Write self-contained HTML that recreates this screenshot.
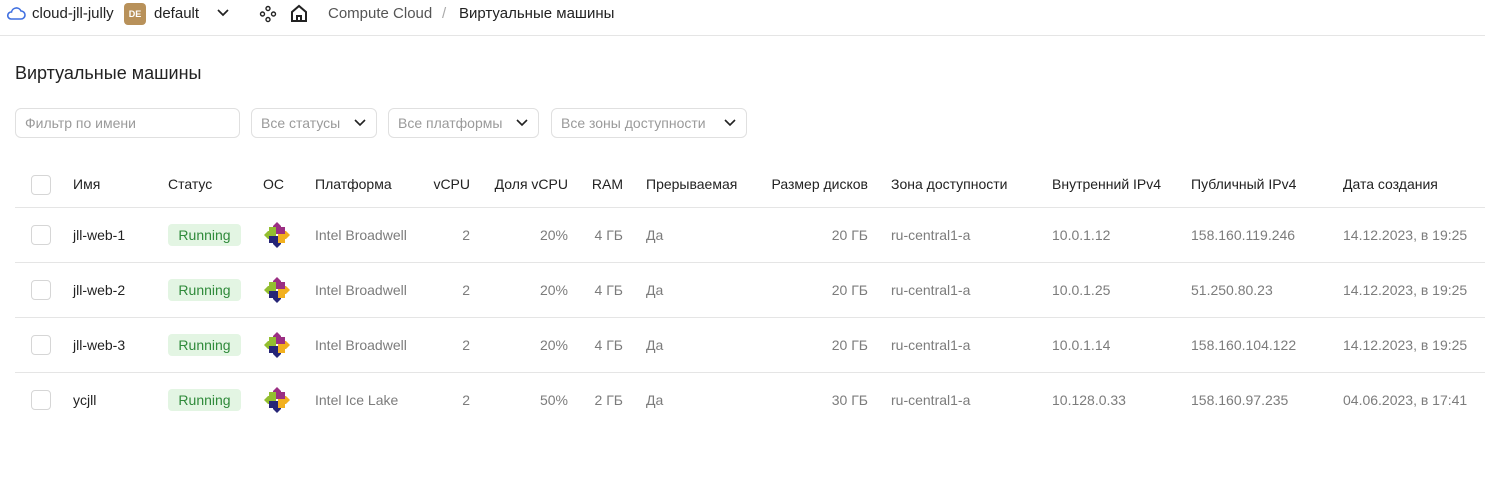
<!DOCTYPE html>
<html><head><meta charset="utf-8"><style>
body{margin:0;width:1485px;height:488px;background:#fff;font-family:"Liberation Sans",sans-serif;font-size:14px;color:#222;position:relative;overflow:hidden}
.a{position:absolute;white-space:nowrap}
.g{color:#7c7c7c}
.r{text-align:right}
.cb{position:absolute;left:31px;width:18px;height:18px;border:1px solid #d6d6d6;border-radius:4px;background:#fff}
.hl{position:absolute;left:15px;right:0;height:1px;background:#e5e5e5}
.run{position:absolute;left:168px;width:73px;height:22px;background:#e3f5e3;color:#2f8a3a;border-radius:4px;text-align:center;line-height:22px}
.sel{position:absolute;top:108px;height:30px;border:1px solid #e0e0e0;border-radius:6px;box-sizing:border-box;color:#9a9a9a;line-height:28px;padding-left:9px}
.sel svg{position:absolute;right:9px;top:9px}
</style></head><body>
<svg class="a" style="left:6px;top:5px" width="20" height="16" viewBox="0 0 20 16"><path d="M5 14h10a4 4 0 0 0 0-8 5 5 0 0 0-9.5 1A3.5 3.5 0 0 0 5 14z" fill="none" stroke="#3f6fe0" stroke-width="1.6"/></svg>
<div class="a" style="left:32px;top:5px;font-size:15px">cloud-jll-jully</div>
<div class="a" style="left:124px;top:3px;width:22px;height:22px;background:#b8915a;border-radius:4px;color:#fff;font-size:9px;font-weight:bold;line-height:22px;text-align:center">DE</div>
<div class="a" style="left:154px;top:5px;font-size:15px">default</div>
<svg class="a" style="left:216px;top:8px" width="14" height="10"><path d="M2 2l5 5 5-5" fill="none" stroke="#222" stroke-width="1.7"/></svg>
<svg class="a" style="left:259px;top:5px" width="18" height="18" viewBox="0 0 18 18" fill="none" stroke="#222" stroke-width="1.4"><circle cx="9" cy="3.5" r="2"/><circle cx="3.5" cy="9" r="2"/><circle cx="14.5" cy="9" r="2"/><circle cx="9" cy="14.5" r="2"/></svg>
<svg class="a" style="left:290px;top:4px" width="18" height="19" viewBox="0 0 18 19" fill="none" stroke="#222" stroke-width="2"><path d="M2 17V8l7-6 7 6v9zM7 17v-5h4v5"/></svg>
<div class="a" style="left:328px;top:5px;font-size:15px;color:#555">Compute Cloud</div>
<div class="a" style="left:442px;top:5px;font-size:15px;color:#aaa">/</div>
<div class="a" style="left:459px;top:5px;font-size:15px">Виртуальные машины</div>
<div class="a" style="left:0;right:0;top:35px;height:1px;background:#e5e5e5"></div>
<div class="a" style="left:15px;top:63px;font-size:18px;font-weight:500">Виртуальные машины</div>
<div class="sel" style="left:15px;width:225px">Фильтр по имени</div>
<div class="sel" style="left:251px;width:126px">Все статусы<svg width="14" height="10"><path d="M2 2l5 5 5-5" fill="none" stroke="#222" stroke-width="1.6"/></svg></div>
<div class="sel" style="left:388px;width:151px">Все платформы<svg width="14" height="10"><path d="M2 2l5 5 5-5" fill="none" stroke="#222" stroke-width="1.6"/></svg></div>
<div class="sel" style="left:551px;width:196px">Все зоны доступности<svg width="14" height="10"><path d="M2 2l5 5 5-5" fill="none" stroke="#222" stroke-width="1.6"/></svg></div>

<div class="cb" style="top:175px"></div>
<div class="a" style="top:176px;left:73px">Имя</div>
<div class="a" style="top:176px;left:168px">Статус</div>
<div class="a" style="top:176px;left:263px">ОС</div>
<div class="a" style="top:176px;left:315px">Платформа</div>
<div class="a r" style="top:176px;left:420px;width:50px">vCPU</div>
<div class="a r" style="top:176px;left:480px;width:88px">Доля vCPU</div>
<div class="a r" style="top:176px;left:573px;width:50px">RAM</div>
<div class="a" style="top:176px;left:646px">Прерываемая</div>
<div class="a r" style="top:176px;left:750px;width:118px">Размер дисков</div>
<div class="a" style="top:176px;left:891px">Зона доступности</div>
<div class="a" style="top:176px;left:1052px">Внутренний IPv4</div>
<div class="a" style="top:176px;left:1191px">Публичный IPv4</div>
<div class="a" style="top:176px;left:1343px">Дата создания</div>
<div class="hl" style="top:207px"></div>

<!-- rows -->
<div id="rows"></div>
<script></script>
<!-- row 1 -->
<div class="cb" style="top:225px"></div><div class="a" style="top:227px;left:73px">jll-web-1</div><div class="run" style="top:224px">Running</div>
<svg class="a" style="left:263px;top:221px" width="28" height="28" viewBox="0 0 28 28"><path d="M14 1l4 4v8h-8V5z" fill="#9b2f83"/><path d="M27 14l-4 4h-8v-8h8z" fill="#f2b01f"/><path d="M14 27l-4-4v-8h8v8z" fill="#262577"/><path d="M1 14l4-4h8v8H5z" fill="#93be30"/><rect x="6" y="6" width="7" height="7" fill="#93be30"/><rect x="15" y="6" width="7" height="7" fill="#9b2f83"/><rect x="6" y="15" width="7" height="7" fill="#262577"/><rect x="15" y="15" width="7" height="7" fill="#f2b01f"/></svg>
<div class="a g" style="top:227px;left:315px">Intel Broadwell</div><div class="a g r" style="top:227px;left:420px;width:50px">2</div><div class="a g r" style="top:227px;left:480px;width:88px">20%</div><div class="a g r" style="top:227px;left:573px;width:50px">4 ГБ</div><div class="a g" style="top:227px;left:646px">Да</div><div class="a g r" style="top:227px;left:750px;width:118px">20 ГБ</div><div class="a g" style="top:227px;left:891px">ru-central1-a</div><div class="a g" style="top:227px;left:1052px">10.0.1.12</div><div class="a g" style="top:227px;left:1191px">158.160.119.246</div><div class="a g" style="top:227px;left:1343px">14.12.2023, в 19:25</div>
<div class="hl" style="top:262px"></div>
<!-- row 2 -->
<div class="cb" style="top:280px"></div><div class="a" style="top:282px;left:73px">jll-web-2</div><div class="run" style="top:279px">Running</div>
<svg class="a" style="left:263px;top:276px" width="28" height="28" viewBox="0 0 28 28"><path d="M14 1l4 4v8h-8V5z" fill="#9b2f83"/><path d="M27 14l-4 4h-8v-8h8z" fill="#f2b01f"/><path d="M14 27l-4-4v-8h8v8z" fill="#262577"/><path d="M1 14l4-4h8v8H5z" fill="#93be30"/><rect x="6" y="6" width="7" height="7" fill="#93be30"/><rect x="15" y="6" width="7" height="7" fill="#9b2f83"/><rect x="6" y="15" width="7" height="7" fill="#262577"/><rect x="15" y="15" width="7" height="7" fill="#f2b01f"/></svg>
<div class="a g" style="top:282px;left:315px">Intel Broadwell</div><div class="a g r" style="top:282px;left:420px;width:50px">2</div><div class="a g r" style="top:282px;left:480px;width:88px">20%</div><div class="a g r" style="top:282px;left:573px;width:50px">4 ГБ</div><div class="a g" style="top:282px;left:646px">Да</div><div class="a g r" style="top:282px;left:750px;width:118px">20 ГБ</div><div class="a g" style="top:282px;left:891px">ru-central1-a</div><div class="a g" style="top:282px;left:1052px">10.0.1.25</div><div class="a g" style="top:282px;left:1191px">51.250.80.23</div><div class="a g" style="top:282px;left:1343px">14.12.2023, в 19:25</div>
<div class="hl" style="top:317px"></div>
<!-- row 3 -->
<div class="cb" style="top:335px"></div><div class="a" style="top:337px;left:73px">jll-web-3</div><div class="run" style="top:334px">Running</div>
<svg class="a" style="left:263px;top:331px" width="28" height="28" viewBox="0 0 28 28"><path d="M14 1l4 4v8h-8V5z" fill="#9b2f83"/><path d="M27 14l-4 4h-8v-8h8z" fill="#f2b01f"/><path d="M14 27l-4-4v-8h8v8z" fill="#262577"/><path d="M1 14l4-4h8v8H5z" fill="#93be30"/><rect x="6" y="6" width="7" height="7" fill="#93be30"/><rect x="15" y="6" width="7" height="7" fill="#9b2f83"/><rect x="6" y="15" width="7" height="7" fill="#262577"/><rect x="15" y="15" width="7" height="7" fill="#f2b01f"/></svg>
<div class="a g" style="top:337px;left:315px">Intel Broadwell</div><div class="a g r" style="top:337px;left:420px;width:50px">2</div><div class="a g r" style="top:337px;left:480px;width:88px">20%</div><div class="a g r" style="top:337px;left:573px;width:50px">4 ГБ</div><div class="a g" style="top:337px;left:646px">Да</div><div class="a g r" style="top:337px;left:750px;width:118px">20 ГБ</div><div class="a g" style="top:337px;left:891px">ru-central1-a</div><div class="a g" style="top:337px;left:1052px">10.0.1.14</div><div class="a g" style="top:337px;left:1191px">158.160.104.122</div><div class="a g" style="top:337px;left:1343px">14.12.2023, в 19:25</div>
<div class="hl" style="top:372px"></div>
<!-- row 4 -->
<div class="cb" style="top:390px"></div><div class="a" style="top:392px;left:73px">ycjll</div><div class="run" style="top:389px">Running</div>
<svg class="a" style="left:263px;top:386px" width="28" height="28" viewBox="0 0 28 28"><path d="M14 1l4 4v8h-8V5z" fill="#9b2f83"/><path d="M27 14l-4 4h-8v-8h8z" fill="#f2b01f"/><path d="M14 27l-4-4v-8h8v8z" fill="#262577"/><path d="M1 14l4-4h8v8H5z" fill="#93be30"/><rect x="6" y="6" width="7" height="7" fill="#93be30"/><rect x="15" y="6" width="7" height="7" fill="#9b2f83"/><rect x="6" y="15" width="7" height="7" fill="#262577"/><rect x="15" y="15" width="7" height="7" fill="#f2b01f"/></svg>
<div class="a g" style="top:392px;left:315px">Intel Ice Lake</div><div class="a g r" style="top:392px;left:420px;width:50px">2</div><div class="a g r" style="top:392px;left:480px;width:88px">50%</div><div class="a g r" style="top:392px;left:573px;width:50px">2 ГБ</div><div class="a g" style="top:392px;left:646px">Да</div><div class="a g r" style="top:392px;left:750px;width:118px">30 ГБ</div><div class="a g" style="top:392px;left:891px">ru-central1-a</div><div class="a g" style="top:392px;left:1052px">10.128.0.33</div><div class="a g" style="top:392px;left:1191px">158.160.97.235</div><div class="a g" style="top:392px;left:1343px">04.06.2023, в 17:41</div>
</body></html>
